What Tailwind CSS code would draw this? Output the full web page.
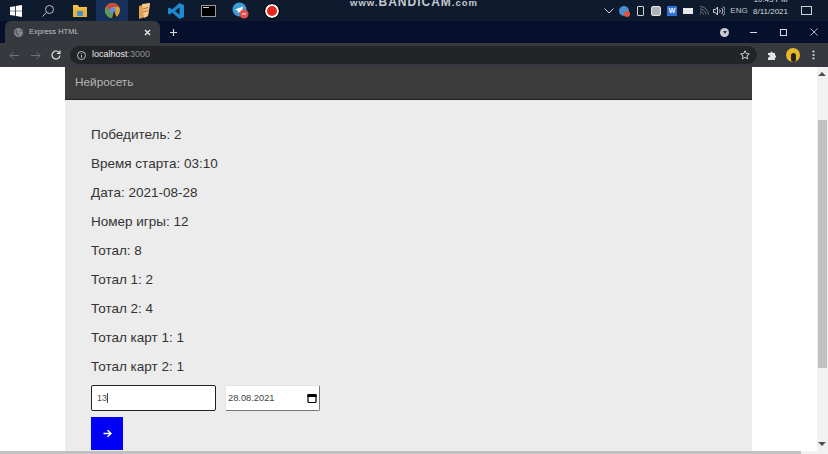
<!DOCTYPE html>
<html lang="ru">
<head>
    <meta charset="UTF-8"/>
    <meta name="viewport" content="width=device-width, initial-scale=1.0"/>
    <title>Express HTML</title>
    <script src="https://cdn.jsdelivr.net/npm/@tailwindcss/browser@4"></script>
</head>
<body class="w-[828px] h-[454px] overflow-hidden bg-white flex flex-col font-['Liberation_Sans',sans-serif]">

<!-- taskbar -->
<div class="relative h-[21px] shrink-0 bg-[#0e1b2e] flex items-center text-white">
    <div class="w-8 h-full flex items-center justify-center">
        <svg width="12" height="12" viewBox="0 0 12 12" fill="#fff"><path d="M0 2l5-.8V5.700H0zM5.800 1L12 0v5.700H5.800zM0 6.300h5v4.500l-5-.8zM5.800 6.300H12V12l-6.200-1z"/></svg>
    </div>
    <div class="w-8 h-full flex items-center justify-center">
        <svg width="14" height="14" viewBox="0 0 14 14" fill="none" stroke="#b9bec6" stroke-width="1"><circle cx="8.500" cy="5.500" r="4"/><path d="M5.500 8.500L1.500 12.500"/></svg>
    </div>
    <div class="w-8 h-full flex items-center justify-center">
        <svg width="16" height="14" viewBox="0 0 16 14"><path d="M1 1h5l1 2h8v10H1z" fill="#f0c24b"/><path d="M1 5h14v8H1z" fill="#e9b23a"/><path d="M5 7h6v5H5z" fill="#4a90c8"/></svg>
    </div>
    <div class="w-8 h-full flex items-center justify-center bg-[#16305a]">
        <svg width="17" height="17" viewBox="0 0 17 17"><circle cx="8.500" cy="8.500" r="7.500" fill="#d9a13a"/><path d="M8.500 1A7.500 7.500 0 0 0 2 4.800L5 9.500 8.500 5h6.500A7.500 7.500 0 0 0 8.500 1z" fill="#c9483c"/><path d="M2 4.800A7.500 7.500 0 0 0 7.500 16L9 11 5 9.500z" fill="#5a9a5c"/><circle cx="8.500" cy="8.500" r="3.200" fill="#5b8fd0"/><path d="M10 9l3 7H8z" fill="#2a2118"/></svg>
    </div>
    <div class="w-8 h-full flex items-center justify-center">
        <svg width="16" height="16" viewBox="0 0 16 16"><path d="M3 3l11-3-2 13-9 3z" fill="#e0a050"/><path d="M6 1l2 14 4-2 2-13z" fill="#f3c98a"/><path d="M7 6l5-1.500M7 9l5-1.500" stroke="#b0702c" stroke-width="1"/></svg>
    </div>
    <div class="w-8 h-full flex items-center justify-center">
        <svg width="16" height="16" viewBox="0 0 16 16"><path d="M11.500 0L16 2v12l-4.500 2L4 9.500 1.500 11.500 0 10.500V5.500l1.500-1L4 6.500zM11.500 4.500L7 8l4.500 3.500z" fill="#1f8ad2"/></svg>
    </div>
    <div class="w-8 h-full flex items-center justify-center">
        <div class="w-[15px] h-[12px] bg-black border border-[#9a9a9a]">
            <div class="w-[6px] h-px bg-[#cfcfcf] mt-px ml-px"></div>
        </div>
    </div>
    <div class="w-8 h-full flex items-center justify-center">
        <svg width="17" height="17" viewBox="0 0 17 17"><circle cx="7.500" cy="7.500" r="7" fill="#3d9bd8"/><path d="M3 7.500l8-3-1.500 7-2.500-1.800-1 1.300-.5-2.500z" fill="#fff"/><circle cx="12" cy="12" r="4.500" fill="#e2504a"/><path d="M10 12h4" stroke="#fff" stroke-width="1"/></svg>
    </div>
    <div class="w-8 h-full flex items-center justify-center">
        <div class="w-[14px] h-[14px] rounded-full bg-[#e5281e] border-2 border-white outline outline-black"></div>
    </div>

    <div class="absolute left-[350px] top-[-4px] text-[#c4c8cd] text-[12px] leading-[13px] font-bold tracking-[1px] whitespace-nowrap">
        <span class="text-[9.500px]">www.</span>BANDICAM<span class="text-[9.500px]">.com</span>
    </div>

    <div class="ml-auto mr-[5px] flex items-center h-full">
        <div class="w-[15px] flex justify-center">
            <svg width="10" height="6" viewBox="0 0 10 6" fill="none" stroke="#cfd3d8" stroke-width="1"><path d="M.5.500L5 5 9.500.500"/></svg>
        </div>
        <div class="w-[16px] flex justify-center">
            <div class="relative w-[10px] h-[10px] rounded-full bg-[#4b8fd0]">
                <div class="absolute right-[-1px] bottom-[-1px] w-[6px] h-[6px] rounded-full bg-[#e0533f]"></div>
            </div>
        </div>
        <div class="w-[16px] flex justify-center">
            <div class="w-[7px] h-[10px] rounded-[1px] border border-[#cfd3d8]"></div>
        </div>
        <div class="w-[16px] flex justify-center">
            <div class="w-[10px] h-[10px] rounded-[2px] bg-[#aeb3b8] border border-[#e5e5e5]"></div>
        </div>
        <div class="w-[16px] flex justify-center">
            <div class="w-[10px] h-[10px] bg-[#2f6fd6] text-white text-[7px] leading-[10px] text-center font-bold">W</div>
        </div>
        <div class="w-[16px] flex justify-center">
            <div class="w-[10px] h-[6px] bg-[#e8e8e8]"></div>
        </div>
        <div class="w-[15px] flex justify-center">
            <svg width="10" height="9" viewBox="0 0 10 9" fill="none" stroke="#6f7680" stroke-width="1"><path d="M1 8.500a1 1 0 0 1 1-1M1 5.500a3.500 3.500 0 0 1 3.500 3M1 3a6 6 0 0 1 6 5.500M1 .500a8.500 8.500 0 0 1 8.500 8"/></svg>
        </div>
        <div class="w-[15px] flex justify-center">
            <svg width="12" height="10" viewBox="0 0 12 10" fill="none" stroke="#cfd3d8" stroke-width="1"><path d="M.5 3.500h2l2-2.500v8l-2-2.500h-2zM6.500 3.500a2 2 0 0 1 0 3M8.500 2a4 4 0 0 1 0 6M10.200.500a6 6 0 0 1 0 9"/></svg>
        </div>
        <div class="w-[26px] text-center text-[#c3c7cc] text-[8px]">ENG</div>
        <div class="w-[37px] text-center text-[#d5d8dc] text-[8px] leading-[12px] mt-[-9px]">
            <div>10:43 PM</div>
            <div>8/11/2021</div>
        </div>
        <div class="w-[34px] flex justify-center">
            <div class="w-[11px] h-[9px] border border-[#cfd3d8]"></div>
        </div>
    </div>
</div>

<!-- tab strip -->
<div class="h-[22px] shrink-0 bg-[#04102c] flex items-end text-white">
    <div class="ml-[5px] w-[155px] h-[22px] bg-[#36393d] rounded-t-[6px] flex items-center px-[9px]">
        <svg width="9" height="9" viewBox="0 0 9 9"><circle cx="4.500" cy="4.500" r="4.500" fill="#84888d"/><path d="M2 2l2 1-1 2 2 1 0 2-2-1-2-3zM6 1l2 2-2 1z" fill="#5a5e63"/></svg>
        <span class="ml-[6px] text-[7.500px] text-[#bfc2c6] whitespace-nowrap">Express HTML</span>
        <svg class="ml-auto" width="7" height="7" viewBox="0 0 7 7" stroke="#eee" stroke-width="1.300"><path d="M1 1l5 5M6 1L1 6"/></svg>
    </div>
    <div class="ml-[9px] h-full flex items-center">
        <svg width="9" height="9" viewBox="0 0 9 9" stroke="#d8dade" stroke-width="1.200"><path d="M4.500 1v7M1 4.500h7"/></svg>
    </div>
    <div class="ml-auto h-full flex items-center">
        <div class="w-[9px] h-[9px] rounded-full bg-[#c9ccd0] flex items-center justify-center">
            <div class="w-0 h-0 border-x-[2.500px] border-x-transparent border-t-[3px] border-t-[#36393d]"></div>
        </div>
        <div class="ml-[21px] w-[7px] h-px bg-[#d8dade]"></div>
        <div class="ml-[23px] w-[7px] h-[7px] border border-[#d8dade]"></div>
        <svg class="ml-[23px] mr-[10px]" width="8" height="8" viewBox="0 0 8 8" stroke="#c8cbd0" stroke-width="0.900"><path d="M.500.500l7 7M7.500.500l-7 7"/></svg>
    </div>
</div>

<!-- toolbar -->
<div class="h-[24px] shrink-0 bg-[#36393d] flex items-center text-white">
    <svg class="ml-[9px]" width="11" height="9" viewBox="0 0 11 9" fill="none" stroke="#6e7176" stroke-width="1"><path d="M10 4.500H1M4.500 1L1 4.500 4.500 8"/></svg>
    <svg class="ml-[10px]" width="11" height="9" viewBox="0 0 11 9" fill="none" stroke="#6e7176" stroke-width="1"><path d="M1 4.500h9M6.500 1L10 4.500 6.500 8"/></svg>
    <svg class="ml-[10px]" width="10" height="10" viewBox="0 0 10 10" fill="none" stroke="#e3e4e6" stroke-width="1.200"><path d="M8.500 3A4 4 0 1 0 9 5.500"/><path d="M9 .500V3.500H6" /></svg>
    <div class="ml-[9px] w-[687px] h-[18px] rounded-full bg-[#222427] flex items-center pl-[7px] pr-[7px]">
        <svg width="9" height="9" viewBox="0 0 9 9" fill="none" stroke="#c8cacd" stroke-width="0.900"><circle cx="4.500" cy="4.500" r="4"/><path d="M4.500 4v2.800M4.500 2.200v1"/></svg>
        <span class="ml-[6px] text-[9px] text-[#e8eaed]">localhost<span class="text-[#8f9296]">:3000</span></span>
        <svg class="ml-auto" width="10" height="10" viewBox="0 0 10 10" fill="none" stroke="#e3e4e6" stroke-width="0.900"><path d="M5 .800l1.300 2.800 3 .3-2.300 2 .7 3L5 7.400 2.300 8.900l.7-3-2.300-2 3-.3z"/></svg>
    </div>
    <svg class="ml-[10px]" width="10" height="10" viewBox="0 0 10 10" fill="#e3e4e6"><path d="M1 3h2.300a1.200 1.200 0 1 1 2.400 0H8v2.300a1.200 1.200 0 1 1 0 2.400V10H1V7.500a1.300 1.300 0 1 0 0-2.500z"/></svg>
    <div class="ml-[9px] relative w-[14px] h-[14px] rounded-full bg-[#e4b82a] overflow-hidden">
        <div class="absolute left-[5px] top-[5px] w-[5px] h-[9px] rounded-full bg-[#2a2018]"></div>
    </div>
    <svg class="ml-[12px]" width="3" height="10" viewBox="0 0 3 10" fill="#d8dade"><circle cx="1.500" cy="1.500" r="1.100"/><circle cx="1.500" cy="5" r="1.100"/><circle cx="1.500" cy="8.500" r="1.100"/></svg>
</div>

<!-- page viewport -->
<div class="flex-1 min-h-0 relative flex bg-white">
    <div class="w-[817px] min-w-0 overflow-hidden">
        <div class="ml-[65px] w-[687px] bg-[#ececec] min-h-[400px]">
            <nav class="h-[33px] bg-[#3b3b3b] border-b border-[#222] flex items-center px-[10px] text-[#b5b5b5] text-[11.800px]">Нейросеть</nav>
            <div class="pt-[24px] pl-[26px] text-[13.500px] leading-[21px] text-[#333]">
                <p class="mb-[8px]">Победитель: 2</p>
                <p class="mb-[8px]">Время старта: 03:10</p>
                <p class="mb-[8px]">Дата: 2021-08-28</p>
                <p class="mb-[8px]">Номер игры: 12</p>
                <p class="mb-[8px]">Тотал: 8</p>
                <p class="mb-[8px]">Тотал 1: 2</p>
                <p class="mb-[8px]">Тотал 2: 4</p>
                <p class="mb-[8px]">Тотал карт 1: 1</p>
                <p class="mb-[8px]">Тотал карт 2: 1</p>
                <div class="flex gap-[9px]">
                    <div class="w-[125px] h-[26px] bg-white border-[1.500px] border-[#222] rounded-[2px] flex items-center pl-[5px] text-[9px] text-[#555]">13<span class="w-px h-[10px] bg-[#444]"></span></div>
                    <div class="w-[95px] h-[26px] bg-white border border-[#e4e4e4] border-r-[#777] border-b-[#777] rounded-[2px] flex items-center pl-[2px] pr-[2px] text-[9.300px] text-[#444]">
                        <span>28.08.2021</span>
                        <svg class="ml-auto" width="10" height="10" viewBox="0 0 10 10" fill="none" stroke="#000" stroke-width="1.200"><rect x="1" y="1.500" width="8" height="8" rx="1"/><path d="M1 1.800h8v1.500H1z" fill="#000"/></svg>
                    </div>
                </div>
                <button class="mt-[6px] w-[32px] h-[33px] bg-[#0000f5] flex items-center justify-center">
                    <svg width="9" height="9" viewBox="0 0 9 9" fill="none" stroke="#fff" stroke-width="1.500"><path d="M.500 4.500h7M4.500 1.200L8 4.500 4.500 7.800"/></svg>
                </button>
            </div>
        </div>
    </div>

    <!-- vertical scrollbar -->
    <div class="w-[11px] bg-[#f1f1f1] relative shrink-0">
        <div class="absolute left-[1px] top-[53px] w-[9px] h-[248px] bg-[#c1c1c1]"></div>
        <div class="absolute left-[1px] top-[5px] w-0 h-0 border-x-[4px] border-x-transparent border-b-[4px] border-b-[#505050]"></div>
        <div class="absolute left-[1px] top-[375px] w-0 h-0 border-x-[4px] border-x-transparent border-t-[4px] border-t-[#505050]"></div>
    </div>

    <!-- horizontal scrollbar -->
    <div class="absolute left-0 bottom-0 w-[817px] h-[3px] bg-[#f1f1f1]">
        <div class="w-[801px] h-full bg-[#c1c1c1]"></div>
    </div>
</div>

</body>
</html>
